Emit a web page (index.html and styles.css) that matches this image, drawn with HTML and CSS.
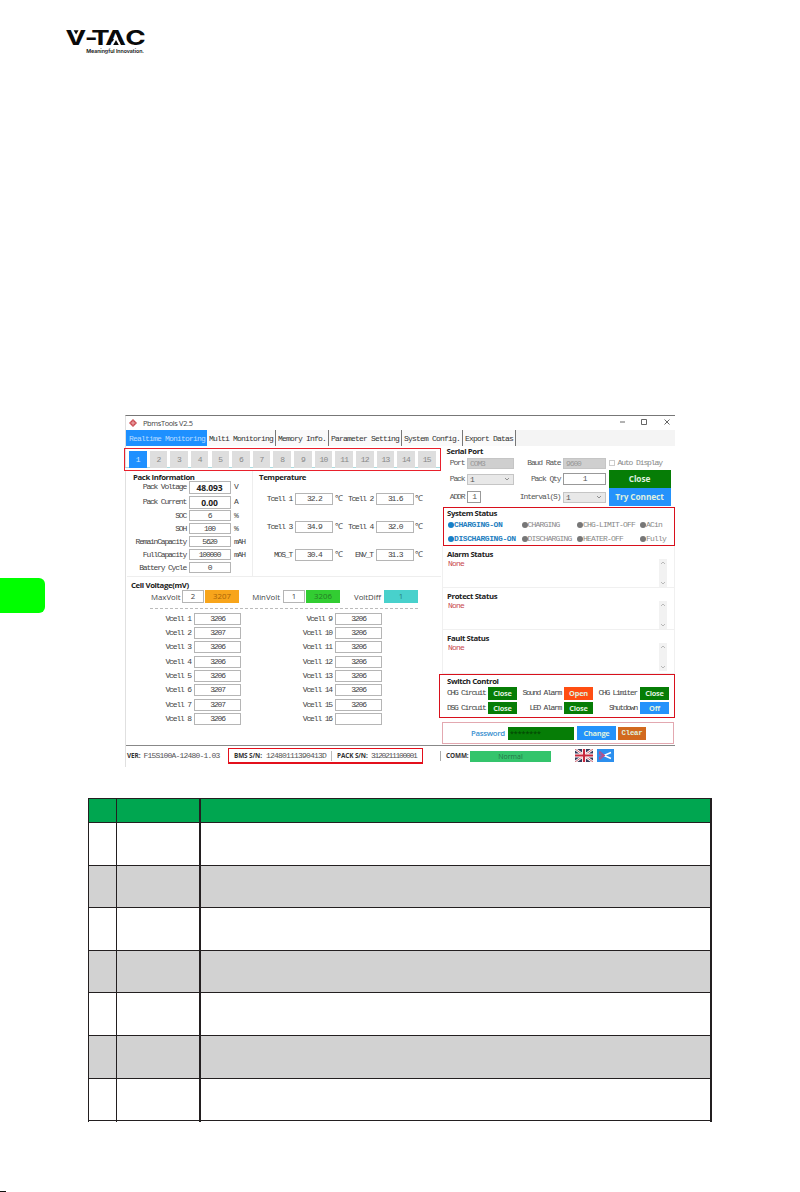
FILE: index.html
```html
<!DOCTYPE html>
<html lang="en">
<head>
<meta charset="utf-8">
<title>V-TAC PbmsTools</title>
<link rel="stylesheet" href="styles.css">
</head>
<body>
<div class="page">
<header class="brand">
  <svg class="logo" width="84" height="20" viewBox="0 0 84 20">
    <text transform="scale(1.35 1)" x="0.4 14.6 19.4 29.9 44.7" y="16">V-TAC</text>
    <path d="M51 5.5L56 16.5H46Z" fill="#fff"/>
    <path d="M51 11L53.8 16H48.2ZM8.6 1.2H13.6L11.1 5.6Z" fill="#0a0a0a"/>
  </svg>
  <div class="tagline">Meaningful Innovation.</div>
</header>
<div class="side-tab"></div>

<main class="window">
  <div class="titlebar">
    <svg width="8" height="8" viewBox="0 0 8 8"><path d="M4 0L8 4L4 8L0 4Z" fill="#c9444b"/><path d="M4 1.5V6.5M1.5 4H6.5" stroke="#f5c3c3" stroke-width=".8"/></svg>
    <span>PbmsTools V2.5</span>
    <svg class="controls" width="56" height="8" viewBox="0 0 56 8" fill="none" stroke="#555" stroke-width=".9"><path d="M1 3H6M22.5 .5H27.5V5.5H22.5ZM45.5 .5L50.5 5.5M50.5 .5L45.5 5.5"/></svg>
  </div>
  <nav class="tabs mono">
    <span class="tab active">Realtime Monitoring</span><span class="tab">Multi Monitoring</span><span class="tab">Memory Info.</span><span class="tab">Parameter Setting</span><span class="tab">System Config.</span><span class="tab">Export Datas</span>
  </nav>
  <div class="body">
    <section class="left">
      <div class="packs mono"><b class="on">1</b><b>2</b><b>3</b><b>4</b><b>5</b><b>6</b><b>7</b><b>8</b><b>9</b><b>10</b><b>11</b><b>12</b><b>13</b><b>14</b><b>15</b></div>
      <div class="info">
        <div class="packinfo">
          <h2 class="w-pack">Pack Information</h2>
          <div class="packgrid mono">
            <label>Pack Voltage</label><i class="big">48.093</i><u>V</u>
            <label>Pack Current</label><i class="big">0.00</i><u>A</u>
            <label>SOC</label><i>6</i><u>%</u>
            <label>SOH</label><i>100</i><u>%</u>
            <label>RemainCapacity</label><i>5620</i><u>mAH</u>
            <label>FullCapacity</label><i>100000</i><u>mAH</u>
            <label>Battery Cycle</label><i>0</i><u></u>
          </div>
        </div>
        <div class="temp">
          <h2>Temperature</h2>
          <div class="tempgrid mono">
            <label>Tcell 1</label><i>32.2</i><u>℃</u><label>Tcell 2</label><i>31.6</i><u>℃</u>
            <label>Tcell 3</label><i>34.9</i><u>℃</u><label>Tcell 4</label><i>32.0</i><u>℃</u>
            <label>MOS_T</label><i>30.4</i><u>℃</u><label>ENV_T</label><i>31.3</i><u>℃</u>
          </div>
        </div>
      </div>
      <div class="cells">
        <h2>Cell Voltage(mV)</h2>
        <div class="summary">
          <label>MaxVolt</label><i>2</i><i class="orange">3207</i>
          <label>MinVolt</label><i>1</i><i class="green">3206</i>
          <label>VoltDiff</label><i class="teal">1</i>
        </div>
        <div class="cellgrid mono">
          <label>Vcell 1</label><i>3206</i><label>Vcell 9</label><i>3206</i>
          <label>Vcell 2</label><i>3207</i><label>Vcell 10</label><i>3206</i>
          <label>Vcell 3</label><i>3206</i><label>Vcell 11</label><i>3206</i>
          <label>Vcell 4</label><i>3206</i><label>Vcell 12</label><i>3206</i>
          <label>Vcell 5</label><i>3206</i><label>Vcell 13</label><i>3206</i>
          <label>Vcell 6</label><i>3207</i><label>Vcell 14</label><i>3206</i>
          <label>Vcell 7</label><i>3207</i><label>Vcell 15</label><i>3206</i>
          <label>Vcell 8</label><i>3206</i><label>Vcell 16</label><i></i>
        </div>
      </div>
    </section>

    <section class="right">
      <div class="serial">
        <h2>Serial Port</h2>
        <div class="serialgrid mono">
          <label>Port</label><div class="select off">COM3</div><label>Baud Rate</label><div class="select off">9600</div><div class="check"><s></s>Auto Display</div>
          <label>Pack</label><div class="select">1<svg width="6" height="4" viewBox="0 0 6 4"><path d="M1 1L3 3L5 1"/></svg></div><label>Pack Qty</label><i>1</i><b class="btn green-btn">Close</b>
          <label>ADDR</label><i class="addr">1</i><label class="interval">Interval(S)</label><div class="select">1<svg width="6" height="4" viewBox="0 0 6 4"><path d="M1 1L3 3L5 1"/></svg></div><b class="btn blue-btn">Try Connect</b>
        </div>
      </div>
      <div class="system">
        <h2>System Status</h2>
        <div class="statusgrid mono">
          <span class="lit">CHARGING-ON</span><span>CHARGING</span><span>CHG-LIMIT-OFF</span><span>ACin</span>
          <span class="lit">DISCHARGING-ON</span><span>DISCHARGING</span><span>HEATER-OFF</span><span>Fully</span>
        </div>
      </div>
      <div class="message"><h2>Alarm Status</h2><div class="log mono">None<svg width="8" height="28" viewBox="0 0 8 28"><path d="M2 5L4 3L6 5M2 23L4 25L6 23"/></svg></div></div>
      <div class="message"><h2>Protect Status</h2><div class="log mono">None<svg width="8" height="28" viewBox="0 0 8 28"><path d="M2 5L4 3L6 5M2 23L4 25L6 23"/></svg></div></div>
      <div class="message last"><h2>Fault Status</h2><div class="log mono">None<svg width="8" height="28" viewBox="0 0 8 28"><path d="M2 5L4 3L6 5M2 23L4 25L6 23"/></svg></div></div>
      <div class="switches">
        <h2>Switch Control</h2>
        <div class="switchgrid mono">
          <label>CHG Circuit</label><b class="btn green-btn">Close</b><label>Sound Alarm</label><b class="btn red-btn">Open</b><label>CHG Limiter</label><b class="btn green-btn">Close</b>
          <label>DSG Circuit</label><b class="btn green-btn">Close</b><label>LED Alarm</label><b class="btn green-btn">Close</b><label>Shutdown</label><b class="btn blue-btn">Off</b>
        </div>
      </div>
      <div class="password"><label>Password</label><div class="secret">********</div><b class="btn blue-btn">Change</b><b class="btn brown-btn mono">Clear</b></div>
    </section>
  </div>
  <footer class="statusbar">
    <div class="version"><b>VER:</b><span class="mono">F15S100A-12480-1.03</span></div>
    <div class="serials"><b>BMS S/N:</b><span class="mono">12480111390413D</span><b class="pack-sn">PACK S/N:</b><span class="mono tight">3120211100001</span></div>
    <b class="comm">COMM:</b><div class="normal">Normal</div>
    <svg class="flag" width="18" height="13" viewBox="0 0 18 13"><path fill="#343b5c" d="M0 0H18V13H0Z"/><path d="M0 0L18 13M18 0L0 13" stroke="#fff" stroke-width="2.6"/><path d="M0 0L18 13M18 0L0 13" stroke="#c43f50" stroke-width=".8"/><path d="M9 0V13M0 6.5H18" stroke="#fff" stroke-width="4"/><path d="M9 0V13M0 6.5H18" stroke="#c8283d" stroke-width="2.2"/></svg>
    <svg width="17" height="13" viewBox="0 0 17 13"><path fill="#2c8fee" d="M0 0H17V13H0Z"/><path d="M7 6.5L14 3.5M7 6.5L14 9.5" stroke="#fff" stroke-width="1.4"/><path d="M2.5 2.5L7.5 6.5L2.5 10.5M2.5 2.5V5L6 6.5L2.5 8V10.5" stroke="#b5508a" stroke-width="1.1" fill="none"/></svg>
  </footer>
</main>

<div class="table">
  <div class="row head"><span></span><span></span><span></span></div>
  <div class="row"><span></span><span></span><span></span></div>
  <div class="row shade"><span></span><span></span><span></span></div>
  <div class="row"><span></span><span></span><span></span></div>
  <div class="row shade"><span></span><span></span><span></span></div>
  <div class="row"><span></span><span></span><span></span></div>
  <div class="row shade"><span></span><span></span><span></span></div>
  <div class="row"><span></span><span></span><span></span></div>
  <div class="row end"><span></span><span></span><span></span></div>
</div>
<div class="corner"></div>
</div>
</body>
</html>
```
FILE: styles.css
```css
* { box-sizing: border-box; }
body { margin: 0; background: #fff; }
.page { width: 800px; height: 1192px; overflow: hidden; position: relative; display: flex; flex-direction: column; font: 8px/10px "Open Sans", sans-serif; color: #444; }
svg { display: block; flex: none; }
.mono { font-family: "Liberation Mono", monospace; font-size: 8px; letter-spacing: -.8px; }
h2 { margin: 0; font: bold 7.8px/10px "Open Sans", sans-serif; letter-spacing: -.38px; color: #222; white-space: nowrap; }
i, u, s { font-style: normal; text-decoration: none; }
label { white-space: nowrap; }

.brand { height: 415px; padding: 29px 0 0 65px; flex: none; }
.logo { overflow: visible; margin-bottom: -2px; }
.logo text { font: 700 20.5px Inter, sans-serif; fill: #0a0a0a; }
.tagline { width: 79px; margin-top: 0; text-align: right; font: 600 5.3px/9px Inter, sans-serif; color: #111; letter-spacing: -.05px; }
.side-tab { position: absolute; left: 0; top: 578px; width: 45px; height: 35px; border-radius: 0 6px 6px 0; background: #0f0; }

.window { margin-left: 125px; width: 550px; height: 352px; flex: none; border-top: 1px solid #777; border-left: 1px solid #e0e0e0; }
.titlebar { display: flex; align-items: center; height: 14px; padding-left: 3px; gap: 6px; letter-spacing: -.35px; font-size: 7.4px; }
.controls { margin-left: auto; }
.tabs { display: flex; height: 16px; background: linear-gradient(90deg, #fafafa 390px, #f4f4f4 390px); color: #333; }
.tab { border-right: 1px solid #777; line-height: 17px; padding: 0 0 0 2px; white-space: nowrap; width: 70px; }
.tab:nth-child(1) { width: 81px; } .tab:nth-child(2) { width: 69px; } .tab:nth-child(3) { width: 53px; } .tab:nth-child(4) { width: 73px; } .tab:nth-child(5) { width: 61px; } .tab:nth-child(6) { width: 53px; }
.tab.active { background: #1e90ff; color: #b9dcff; padding-left: 3px; border: 0; }
.body { display: flex; height: 300px; border-bottom: 1px solid #888; }
.left { width: 315px; padding-top: 2px; flex: none; }

.packs { display: flex; gap: 3.1px; margin-left: -2px; width: 317px; height: 23px; padding: 2px 0 0 4px; border: 1px solid #e8202c; box-shadow: inset 0 -2px #fff, inset 0 -3px #a9dbe0; }
.packs b { width: 17.55px; height: 17px; flex: none; background: #dedede; color: #888; text-align: center; font-weight: normal; line-height: 17px; }
.packs .on { background: #1e90ff; color: #d5e9ff; }
.info { display: flex; height: 106px; margin-left: 1px; border-bottom: 1px solid #eee; }
.packinfo { width: 126px; padding-top: 1px; border-right: 1px solid #eee; }
.packinfo h2 { padding-left: 6px; }
.packgrid { display: grid; grid-template-columns: 59px 42px 20px; column-gap: 2.5px; grid-template-rows: 14.5px 15px 12.6px 13px 13px 13px 13px; align-items: center; margin-top: -2px; letter-spacing: -1.2px; }
.packgrid label, .tempgrid label, .cellgrid label, .serialgrid label, .switchgrid label { text-align: right; }
i { display: block; height: 11px; line-height: 9.5px; border: 1px solid #b5b5b5; text-align: center; background: #fff; }
.packgrid .big { height: 13px; font: bold 8.5px/11px "Open Sans", sans-serif; letter-spacing: -.1px; color: #222; }
.packgrid u { padding-left: 1px; }
.temp { padding: 1px 0 0 6px; }
.tempgrid { display: grid; grid-template-columns: 35px 38px 12px 27px 38px 10px; grid-template-rows: repeat(3, 28px); column-gap: 1.3px; align-items: center; margin-top: 2.5px; letter-spacing: -1.2px; }
.tempgrid label { padding-right: 2px; }
.tempgrid u { font-size: 8px; padding-left: 0; }
.tempgrid i { height: 12px; }
.cells h2 { padding: 3px 0 0 5px; margin-bottom: 0; }
.summary { display: grid; grid-template-columns: 30px 22px 34px 42px 22px 34px 42px 34px; column-gap: 1px; margin: -1px 0 0 24px; padding: 1px 0 5px 1px; width: 268px; height: 20px; align-items: center; border-bottom: 1px dashed #bbb; font-size: 7.8px; }
.summary label { text-align: right; padding-right: 2px; }
.summary i { height: 13px; line-height: 11px; }
.summary .orange { background: #f8a51b; border-color: #f8a51b; color: #a86408; }
.summary .green { background: #32cd32; border-color: #32cd32; color: #267c26; }
.summary .teal { background: #48d1cc; border-color: #48d1cc; color: #277c7a; }
.cellgrid { display: grid; grid-template-columns: 65px 47px 88px 47px; column-gap: 3px; row-gap: 2.35px; grid-auto-rows: 12px; margin-top: 3.5px; align-items: center; letter-spacing: -1.15px; }
.cellgrid i { height: 12px; line-height: 9px; }

.right { width: 234px; flex: none; }
.serial { height: 61px; padding-left: 5.5px; }
.serialgrid { display: grid; grid-template-columns: 18px 47px 44px 43px 62px; column-gap: 2.5px; grid-template-rows: 14px 18px 18px; row-gap: 0; align-items: center; color: #555; letter-spacing: -1.1px; }
.select { display: flex; justify-content: space-between; align-items: center; height: 11px; padding: 0 3px 0 2px; border: 1px solid #c5c5c5; background: #e8e8e8; line-height: 9px; }
.select.off { background: #cfcfcf; color: #999; }
.select path { fill: none; stroke: #777; stroke-width: .8; }
.serialgrid i { height: 12px; line-height: 10px; border-color: #999; }
.serialgrid .addr { width: 14px; }
.check { display: flex; align-items: center; gap: 3px; color: #888; white-space: nowrap; }
.check s { width: 6px; height: 6px; border: 1px solid #ccc; }
.btn { display: block; text-align: center; color: #dff0df; font: bold 7.4px/12px "Open Sans", sans-serif; letter-spacing: -.25px; white-space: nowrap; }
.serialgrid .btn { height: 17.5px; font-size: 8.3px; line-height: 17px; letter-spacing: -.1px; }
.green-btn { background: #067d06; } .blue-btn { background: #2492fb; } .red-btn { background: #ff4e12; } .brown-btn { background: #d2691e; }
.system { height: 39px; margin-left: 2px; width: 232px; border: 1px solid #d8101c; padding-left: 3px; }
.statusgrid { display: grid; grid-template-columns: 73.5px 55.5px 63px 30px; grid-template-rows: 13.5px 13.5px; align-items: center; margin-top: .5px; margin-left: 1px; color: #888; }
.statusgrid span { display: flex; align-items: center; white-space: nowrap; }
.statusgrid span::before { content: ""; width: 6px; height: 6px; border-radius: 50%; background: #777; }
.statusgrid .lit { color: #2480bf; font-weight: bold; letter-spacing: -.4px; }
.statusgrid .lit::before { background: #1580c8; }
.message { height: 42px; padding: 3px 7px 0 5px; border: 1px solid #f0f0f0; border-width: 0 1px 1px; margin-left: 1px; }
.message h2 { margin-left: -1px; }
.message.last { height: 44px; }
.log { display: flex; justify-content: space-between; color: #c84550; height: 28px; padding-left: 0; line-height: 9px; }
.log svg { background: #f2f2f2; fill: none; stroke: #aaa; stroke-width: .8; }
.switches { height: 44px; margin-left: -2px; width: 236px; border: 1px solid #d8101c; padding: 1px 0 0 7px; }
.switches h2 { margin-top: 0; }
.switchgrid { display: grid; grid-template-columns: 39px 29px 43px 29px 43px 29px; column-gap: 2px; row-gap: 2px; grid-auto-rows: 12.5px; align-items: center; margin-top: 1px; }
.switchgrid .btn { height: 12.5px; }
.switchgrid label { letter-spacing: -1.3px; padding-right: 1px; }
.password { display: flex; align-items: center; margin: 4px 0 0 1px; width: 232px; height: 22px; border: 1px solid #e3a8b0; padding-left: 28px; }
.password label { font-weight: 600; color: #398fd0; width: 37px; font-size: 7.8px; letter-spacing: -.3px; }
.secret { width: 66px; height: 13px; background: #067d06; color: #033d03; line-height: 13px; padding-left: 2px; font-size: 7px; margin-right: 3px; }
.password .btn { width: 39px; height: 14px; line-height: 14px; margin-right: 2px; }
.password .brown-btn { width: 28px; height: 13px; line-height: 13px; font-family: "Liberation Mono", monospace; }

.statusbar { display: flex; align-items: center; height: 20px; padding: 0 0 0 1px; font-size: 6.4px; color: #333; }
.statusbar .mono { color: #555; white-space: nowrap; }
.statusbar b { letter-spacing: -.1px; white-space: nowrap; }
.version { display: flex; width: 101px; gap: 3px; }
.serials { display: flex; align-items: center; width: 195px; height: 16px; border: 1px solid #e3101c; border-bottom-width: 2px; padding-left: 5px; }
.serials b { width: 32px; }
.serials .pack-sn { width: 40px; padding-left: 5px; border-left: 1px solid #bbb; margin-left: 5px; }
.serials .tight { letter-spacing: -1.3px; }
.comm { margin-left: 17px; padding-left: 5px; width: 30px; border-left: 1px solid #aaa; }
.normal { width: 81px; height: 11px; background: #34c46c; color: #267347; text-align: center; line-height: 11px; font-size: 7px; }
.flag { margin: 0 4px 0 24px; }
.statusbar svg { position: relative; top: -1px; }

.table { margin: 31px 0 0 88px; width: 624px; flex: none; }
.row { display: grid; grid-template-columns: 28px 83px 513px; height: 43px; }
.row:nth-child(3), .row:nth-child(5), .row:nth-child(8) { height: 42px; }
.row span { border-top: 1px solid #231f20; border-left: 1px solid #231f20; }
.row span:last-child { border-left-width: 2px; border-right: 2px solid #231f20; }
.row.head { height: 24px; } .head span { background: #00a650; }
.shade span { background: #d2d2d2; }
.row.end { height: 2px; }
.corner { width: 6px; height: 1px; margin-top: auto; background: #111; }
```
